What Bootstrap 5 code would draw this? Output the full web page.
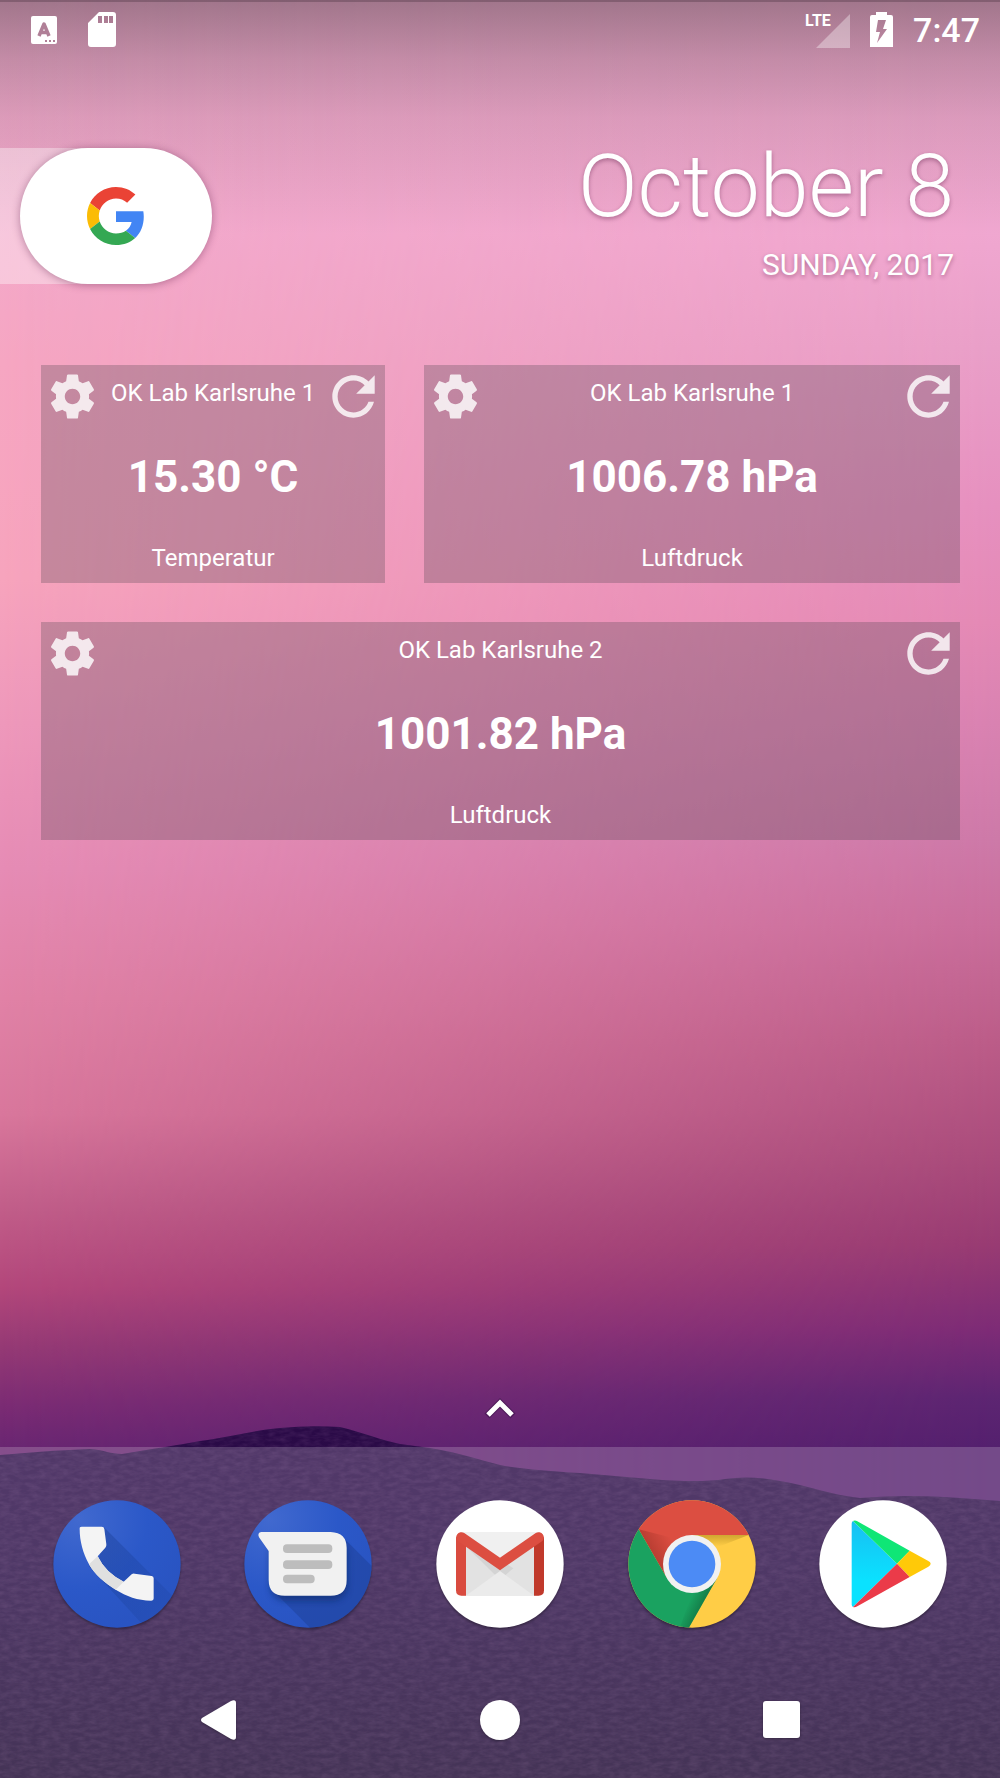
<!DOCTYPE html>
<html lang="de">
<head>
<meta charset="utf-8">
<meta name="viewport" content="width=device-width, initial-scale=1">
<title>Home screen</title>
<link href="https://cdn.jsdelivr.net/npm/bootstrap@5.3.0/dist/css/bootstrap.min.css" rel="stylesheet">
<style>
  body { font-family: Roboto, "Noto Sans", sans-serif; background: #4a3359; }
  .screen { z-index: 0; }
  .wallpaper { z-index: -1; }
  .statusbar { height: 58px; padding: 2px 20px 0 31px; }
  .clock-text { font-size: 34px; line-height: 40px; font-weight: 500; }
  .signal { width: 43px; height: 36px; }
  .lte { font-size: 16px; line-height: 18px; font-weight: 700; left: -2px; }
  .top-row { padding-top: 90px; }
  .search-tab { width: 212px; height: 136px; padding-left: 20px;
    background: linear-gradient(90deg, rgba(255,255,255,.36) 90px, transparent 130px); }
  .search-pill { border-radius: 68px; box-shadow: 0 1px 8px rgba(80,20,60,.4); }
  .date-block { padding-right: 46px; text-shadow: 0 2px 4px rgba(80,20,60,.4); }
  .date-day { font-size: 88px; line-height: 76px; font-weight: 300; }
  .date-year { font-size: 30px; line-height: 36px; margin-top: 23px; }
  .widgets { display: grid; grid-template-columns: repeat(5, 1fr); gap: 39px; padding: 81px 40px 0 41px; }
  .span-2 { grid-column: span 2; }
  .span-3 { grid-column: span 3; }
  .span-5 { grid-column: span 5; }
  .sensor { height: 218px; padding: 5px; background: rgba(80,70,80,.29); }
  .sensor-head { height: 45px; }
  .sensor h2 { font-size: 24px; line-height: 46px; font-weight: 400; }
  .sensor-value { font-size: 44px; line-height: 52px; font-weight: 700; }
  .sensor-kind { font-size: 24px; line-height: 40px; }
  .plain-btn { background: none; border: 0; padding: 0; color: inherit; display: block; }
  .sensor .plain-btn { opacity: .82; }
  .dock { background: rgba(255,255,255,.19); padding-top: 53px; }
  .apps { padding: 0 21px; }
  .apps svg { filter: drop-shadow(0 2px 1px rgba(0,0,0,.3)); }
  .navkeys { padding: 70px 78px 36px; }
  .navkeys svg { filter: drop-shadow(0 1px 1px rgba(0,0,0,.3)); }
  .drawer-up { padding-bottom: 27px; }
</style>
<script src="https://cdn.jsdelivr.net/npm/bootstrap@5.3.0/dist/js/bootstrap.bundle.min.js"></script>
</head>
<body class="text-white">
<div class="screen position-relative min-vh-100 d-flex flex-column overflow-hidden">

  <!-- wallpaper: dusk sky over hills -->
  <svg class="wallpaper position-absolute top-0 start-0 w-100 h-100" viewBox="0 0 1000 1778" preserveAspectRatio="none" aria-hidden="true">
    <defs>
      <linearGradient id="skyL" gradientUnits="userSpaceOnUse" x1="0" y1="0" x2="0" y2="1447">
        <stop offset="0" stop-color="#efa8ca"/><stop offset=".15" stop-color="#f3a9cb"/>
        <stop offset=".25" stop-color="#f6a6c2"/><stop offset=".4" stop-color="#f7a4bd"/>
        <stop offset=".5" stop-color="#ee98bb"/><stop offset=".6" stop-color="#e68cb5"/>
        <stop offset=".69" stop-color="#e182a6"/><stop offset=".77" stop-color="#d9779c"/>
        <stop offset=".83" stop-color="#c3608b"/><stop offset=".89" stop-color="#b3477b"/>
        <stop offset=".93" stop-color="#963a75"/><stop offset=".97" stop-color="#7c2c74"/>
        <stop offset="1" stop-color="#6a2672"/>
      </linearGradient>
      <linearGradient id="skyR" gradientUnits="userSpaceOnUse" x1="0" y1="0" x2="0" y2="1447">
        <stop offset="0" stop-color="#efa8ca"/><stop offset=".16" stop-color="#f0a7d0"/>
        <stop offset=".24" stop-color="#e99fc8"/><stop offset=".35" stop-color="#e690bf"/>
        <stop offset=".43" stop-color="#e489b5"/><stop offset=".5" stop-color="#d982b1"/>
        <stop offset=".58" stop-color="#cd79a8"/><stop offset=".64" stop-color="#c96d9b"/>
        <stop offset=".72" stop-color="#bb5c88"/><stop offset=".8" stop-color="#a94b7b"/>
        <stop offset=".86" stop-color="#983b72"/><stop offset=".92" stop-color="#7c2b76"/>
        <stop offset=".965" stop-color="#5d2572"/><stop offset="1" stop-color="#54206e"/>
      </linearGradient>
      <linearGradient id="fade"><stop offset="0" stop-color="#000"/><stop offset="1" stop-color="#fff"/></linearGradient>
      <mask id="toRight"><rect width="1000" height="1778" fill="url(#fade)"/></mask>
      <linearGradient id="scrim" gradientUnits="userSpaceOnUse" x1="0" y1="0" x2="0" y2="235">
        <stop offset="0" stop-color="#1c2020" stop-opacity=".37"/><stop offset=".25" stop-color="#1c2020" stop-opacity=".21"/>
        <stop offset=".5" stop-color="#1c2020" stop-opacity=".1"/><stop offset="1" stop-color="#1c2020" stop-opacity="0"/>
      </linearGradient>
      <linearGradient id="hill" x1="0" y1="0" x2="0" y2="1">
        <stop offset="0" stop-color="#2a0a47"/><stop offset=".4" stop-color="#260a43"/><stop offset="1" stop-color="#1a0530"/>
      </linearGradient>
      <filter id="grain" x="0" y="0" width="1" height="1">
        <feTurbulence type="fractalNoise" baseFrequency=".1 .24" numOctaves="3" seed="4"/>
        <feColorMatrix values="0 0 0 0 .6  0 0 0 0 .3  0 0 0 0 .6  1 0 0 0 -.3"/>
        <feComposite in2="SourceGraphic" operator="in"/>
      </filter>
      <path id="ridge" d="M0 1455L50 1451 90 1449C105 1450 110 1454 122 1454C150 1449 180 1445 200 1441C230 1437 250 1431 280 1428Q310 1425 340 1427C365 1433 380 1440 400 1444L430 1448C460 1453 480 1460 500 1465C520 1469 550 1471 580 1473L650 1479Q700 1483 725 1479T780 1481C810 1486 830 1495 860 1498Q910 1494 960 1498L1000 1501V1778H0Z"/>
    </defs>
    <rect width="1000" height="1778" fill="url(#skyL)"/>
    <rect width="1000" height="1778" fill="url(#skyR)" mask="url(#toRight)"/>
    <rect width="1000" height="235" fill="url(#scrim)"/>
    <rect width="1000" height="2" fill="#3c2834" opacity=".3"/>
    <use href="#ridge" fill="url(#hill)"/>
    <use href="#ridge" fill="#fff" filter="url(#grain)" opacity=".2"/>
  </svg>

  <header class="statusbar d-flex align-items-center justify-content-between">
    <div class="d-flex align-items-center">
      <svg width="26" height="28" viewBox="0 0 26 28" role="img" aria-label="Tastatur">
        <rect width="26" height="28" rx="2" fill="#fff"/>
        <path d="M8 20l5-12 5 12M10 16.500h6" fill="none" stroke="#b07f97" stroke-width="3.500" stroke-linejoin="round"/>
        <path d="M14 24h2v2h-2zM18 24h2v2h-2zM22 24h2v2h-2z" fill="#b07f97"/>
      </svg>
      <svg class="ms-4" width="42" height="36" viewBox="-7 0 42 36" role="img" aria-label="SD-Karte">
        <path fill="#fff" fill-rule="evenodd" d="M11 0H25Q28 0 28 3V32Q28 35 25 35H3Q0 35 0 32V11ZM10 4v7h4V4zM16 4v7h4V4zM21 4v7h4V4z"/>
      </svg>
    </div>
    <div class="d-flex align-items-center">
      <div class="signal position-relative">
        <svg class="position-absolute bottom-0 end-0" width="34" height="34" viewBox="0 0 34 34" aria-hidden="true"><path d="M34 0V34H0z" fill="#fff" opacity=".35"/></svg>
        <span class="lte position-absolute top-0">LTE</span>
      </div>
      <svg class="ms-3" width="31" height="36" viewBox="-4 0 31 36" role="img" aria-label="Akku lädt">
        <path fill="#fff" fill-rule="evenodd" d="M6 0H17V3H21Q23 3 23 5V35H0V5Q0 3 2 3H6ZM8 8L6 20H10L7 31 17 17H13L16 8Z"/>
      </svg>
      <span class="clock-text ms-3">7:47</span>
    </div>
  </header>

  <section class="top-row d-flex justify-content-between align-items-start">
    <div class="search-tab">
      <button class="search-pill plain-btn bg-white w-100 h-100 d-flex align-items-center justify-content-center" aria-label="Google-Suche">
        <svg width="58" height="58" viewBox="0 0 48 48" aria-hidden="true">
          <path fill="#EA4335" d="M24 9.500c3.540 0 6.710 1.220 9.210 3.600l6.850-6.850C35.900 2.380 30.470 0 24 0 14.620 0 6.510 5.380 2.560 13.220l7.980 6.190C12.430 13.720 17.740 9.500 24 9.500z"/>
          <path fill="#4285F4" d="M46.980 24.550c0-1.570-.15-3.090-.38-4.550H24v9.020h12.940c-.58 2.960-2.260 5.480-4.780 7.180l7.730 6c4.510-4.180 7.090-10.360 7.090-17.650z"/>
          <path fill="#FBBC05" d="M10.530 28.590c-.48-1.450-.76-2.990-.76-4.590s.27-3.140.76-4.590l-7.980-6.190C.92 16.460 0 20.120 0 24c0 3.880.92 7.540 2.560 10.780l7.970-6.190z"/>
          <path fill="#34A853" d="M24 48c6.480 0 11.930-2.130 15.890-5.810l-7.730-6c-2.150 1.450-4.920 2.300-8.160 2.300-6.260 0-11.570-4.220-13.470-9.910l-7.980 6.190C6.510 42.620 14.620 48 24 48z"/>
        </svg>
      </button>
    </div>
    <div class="date-block text-end">
      <div class="date-day">October 8</div>
      <div class="date-year">SUNDAY, 2017</div>
    </div>
  </section>

  <svg class="d-none" aria-hidden="true">
    <symbol id="gear" viewBox="0 0 24 24"><path fill="#fff" d="M19.430 12.980c.04-.32.070-.64.070-.98s-.03-.66-.07-.98l2.110-1.650c.19-.15.240-.42.120-.64l-2-3.460c-.12-.22-.39-.3-.61-.22l-2.490 1c-.52-.4-1.080-.73-1.690-.98l-.38-2.650C14.460 2.180 14.250 2 14 2h-4c-.25 0-.46.180-.49.420l-.38 2.650c-.61.250-1.170.590-1.690.980l-2.490-1c-.23-.09-.49 0-.61.220l-2 3.460c-.13.220-.07.490.120.640l2.110 1.650c-.04.320-.07.650-.07.980s.03.660.070.980l-2.110 1.650c-.19.150-.24.420-.12.640l2 3.460c.12.220.390.300.610.220l2.490-1c.52.400 1.080.730 1.690.980l.38 2.650c.03.240.240.420.490.420h4c.25 0 .46-.18.490-.42l.38-2.650c.61-.25 1.170-.59 1.690-.98l2.490 1c.23.090.49 0 .61-.22l2-3.460c.12-.22.070-.49-.12-.64l-2.110-1.650zM12 15.500c-1.930 0-3.500-1.570-3.500-3.500s1.570-3.500 3.500-3.500 3.500 1.570 3.500 3.500-1.570 3.500-3.500 3.500z"/></symbol>
    <symbol id="reload" viewBox="2 2 20 20"><path fill="#fff" d="M17.650 6.350C16.200 4.900 14.210 4 12 4c-4.420 0-7.990 3.580-7.990 8s3.570 8 7.990 8c3.730 0 6.840-2.550 7.730-6h-2.080c-.82 2.330-3.040 4-5.650 4-3.310 0-6-2.690-6-6s2.690-6 6-6c1.660 0 3.140.690 4.220 1.780L13 11h7V4l-2.350 2.350z"/></symbol>
  </svg>

  <main class="widgets">
    <article class="sensor span-2 d-flex flex-column justify-content-between text-center">
      <div class="sensor-head d-flex align-items-start">
        <button class="plain-btn" aria-label="Einstellungen"><svg class="d-block" width="53" height="53"><use href="#gear"/></svg></button>
        <h2 class="flex-fill m-0">OK Lab Karlsruhe 1</h2>
        <button class="plain-btn" aria-label="Aktualisieren"><svg class="d-block" width="53" height="53"><use href="#reload"/></svg></button>
      </div>
      <div class="sensor-value">15.30 °C</div>
      <div class="sensor-kind">Temperatur</div>
    </article>
    <article class="sensor span-3 d-flex flex-column justify-content-between text-center">
      <div class="sensor-head d-flex align-items-start">
        <button class="plain-btn" aria-label="Einstellungen"><svg class="d-block" width="53" height="53"><use href="#gear"/></svg></button>
        <h2 class="flex-fill m-0">OK Lab Karlsruhe 1</h2>
        <button class="plain-btn" aria-label="Aktualisieren"><svg class="d-block" width="53" height="53"><use href="#reload"/></svg></button>
      </div>
      <div class="sensor-value">1006.78 hPa</div>
      <div class="sensor-kind">Luftdruck</div>
    </article>
    <article class="sensor span-5 d-flex flex-column justify-content-between text-center">
      <div class="sensor-head d-flex align-items-start">
        <button class="plain-btn" aria-label="Einstellungen"><svg class="d-block" width="53" height="53"><use href="#gear"/></svg></button>
        <h2 class="flex-fill m-0">OK Lab Karlsruhe 2</h2>
        <button class="plain-btn" aria-label="Aktualisieren"><svg class="d-block" width="53" height="53"><use href="#reload"/></svg></button>
      </div>
      <div class="sensor-value">1001.82 hPa</div>
      <div class="sensor-kind">Luftdruck</div>
    </article>
  </main>

  <div class="drawer-up mt-auto d-flex justify-content-center">
    <button class="plain-btn" aria-label="Alle Apps">
      <svg class="d-block" width="34" height="22" viewBox="0 0 34 22"><path d="M4 18L17 5 30 18" fill="none" stroke="#2c0b3c" stroke-opacity=".45" stroke-width="7"/><path d="M5 17L17 5 29 17" fill="none" stroke="#fff" stroke-width="5"/></svg>
    </button>
  </div>

  <footer class="dock">
    <div class="apps d-flex">
      <a href="#phone" class="col d-flex justify-content-center" aria-label="Telefon">
        <svg width="128" height="128" viewBox="160 361 384 384">
          <defs>
            <radialGradient id="blue" cx=".2" cy=".15" r=".9"><stop offset="0" stop-color="#4169cf"/><stop offset=".6" stop-color="#2b58c8"/><stop offset="1" stop-color="#2954c2"/></radialGradient>
            <clipPath id="cp"><circle cx="352" cy="553" r="191"/></clipPath>
            <linearGradient id="ls" x1="0" y1="0" x2="1" y2="1"><stop offset="0" stop-color="#173a8c" stop-opacity=".4"/><stop offset="1" stop-color="#173a8c" stop-opacity=".08"/></linearGradient>
          </defs>
          <circle cx="352" cy="553" r="191" fill="url(#blue)"/>
          <path clip-path="url(#cp)" fill="url(#ls)" d="M313 443L560 690 480 790 268 560 300 530Z"/>
          <path fill="#f4f4f4" d="M240 448Q239 441 246 441H306Q313 441 314 448L320 494Q321 500 317 504L294 530Q318 580 372 606L396 584Q400 581 405 582L456 589Q462 590 462 596V656Q462 663 454 663C414 662 380 650 348 630C315 610 285 584 268 554C250 520 240 485 240 448Z"/>
          <path fill="#e0e0e0" d="M268 554L294 530Q318 580 372 606L348 630C315 610 285 584 268 554Z"/>
        </svg>
      </a>
      <a href="#messages" class="col d-flex justify-content-center" aria-label="Nachrichten">
        <svg width="128" height="128" viewBox="734 361 384 384">
          <defs><clipPath id="cm"><circle cx="926" cy="553" r="191"/></clipPath>
            <filter id="soft" x="-20%" y="-20%" width="140%" height="150%"><feGaussianBlur stdDeviation="9"/></filter></defs>
          <circle cx="926" cy="553" r="191" fill="url(#blue)"/>
          <path clip-path="url(#cm)" fill="#1c3f92" opacity=".45" d="M1030 472L1130 572V760H948L820 632Z"/>
          <rect x="812" y="480" width="232" height="184" rx="46" fill="#102a66" opacity=".55" filter="url(#soft)" clip-path="url(#cm)"/>
          <path fill="#f1f1f1" d="M786 457H994Q1042 459 1042 505V600Q1042 648 994 648H856Q808 648 808 600V514L779 473Q773 459 786 457Z"/>
          <g fill="#bdbdbd"><rect x="851" y="494" width="148" height="26" rx="12"/><rect x="851" y="542" width="148" height="26" rx="12"/><rect x="851" y="585" width="95" height="26" rx="12"/></g>
        </svg>
      </a>
      <a href="#gmail" class="col d-flex justify-content-center" aria-label="Gmail">
        <svg width="128" height="128" viewBox="1308 361 384 384">
          <circle cx="1500" cy="553" r="191" fill="#fff"/>
          <rect x="1384" y="457" width="232" height="191" fill="#e2e2e2"/>
          <path d="M1384 457H1616L1500 545Z" fill="#f0f0f0"/>
          <path d="M1398 500L1500 600 1540 566 1500 540Z" fill="#d4d4d4"/>
          <path d="M1398 648L1500 574 1602 648Z" fill="#ebebeb"/>
          <path d="M1368 473H1398V648H1384Q1368 648 1368 632Z" fill="#d94b3f"/>
          <path d="M1632 473H1602V648H1616Q1632 648 1632 632Z" fill="#c0392b"/>
          <path d="M1384 473L1500 553 1616 473" fill="none" stroke="#dc4e41" stroke-width="31" stroke-linecap="round" stroke-linejoin="miter"/>
        </svg>
      </a>
      <a href="#chrome" class="col d-flex justify-content-center" aria-label="Chrome">
        <svg width="128" height="128" viewBox="384 361 384 384">
          <defs>
            <linearGradient id="rs" gradientUnits="userSpaceOnUse" x1="440" y1="510" x2="510" y2="470"><stop offset="0" stop-color="#7a2018" stop-opacity=".4"/><stop offset="1" stop-color="#7a2018" stop-opacity="0"/></linearGradient>
            <linearGradient id="ys" gradientUnits="userSpaceOnUse" x1="0" y1="466" x2="0" y2="500"><stop offset="0" stop-color="#8a6a10" stop-opacity=".4"/><stop offset="1" stop-color="#8a6a10" stop-opacity="0"/></linearGradient>
            <linearGradient id="gs" gradientUnits="userSpaceOnUse" x1="610" y1="680" x2="570" y2="660"><stop offset="0" stop-color="#0a4a28" stop-opacity=".45"/><stop offset="1" stop-color="#0a4a28" stop-opacity="0"/></linearGradient>
            <clipPath id="cc"><circle cx="576" cy="553" r="191"/></clipPath>
          </defs>
          <g clip-path="url(#cc)">
            <rect x="384" y="361" width="384" height="384" fill="#ffcd46"/>
            <path d="M576 466H746L660 500H610Z" fill="url(#ys)"/>
            <path d="M416 449L350 340H800V466H576L501 596Z" fill="#dc4e41"/>
            <path d="M416 449L501 596 540 480Z" fill="url(#rs)"/>
            <path d="M416 449L501 596 576 630 651 596 560 756H370V400Z" fill="#1aa260"/>
            <path d="M651 596L560 756 540 742 580 630Z" fill="url(#gs)"/>
          </g>
          <circle cx="576" cy="553" r="87" fill="#f1f1f1"/><circle cx="576" cy="553" r="70" fill="#4c8bf5"/>
        </svg>
      </a>
      <a href="#play" class="col d-flex justify-content-center" aria-label="Play Store">
        <svg width="128" height="128" viewBox="958 361 384 384">
          <defs><linearGradient id="pb" x1="0" y1="0" x2="0" y2="1"><stop offset="0" stop-color="#18bff2"/><stop offset=".7" stop-color="#0ae2ff"/></linearGradient></defs>
          <circle cx="1150" cy="553" r="191" fill="#fff"/>
          <path d="M1060 424L1192 552 1060 682Q1056 680 1056 674V432Q1056 426 1060 424Z" fill="url(#pb)"/>
          <path d="M1060 424Q1066 420 1073 425L1230 513 1192 552Z" fill="#0fe676"/>
          <path d="M1230 513L1286 544Q1300 552 1286 561L1230 592 1192 552Z" fill="#ffc908"/>
          <path d="M1192 552L1230 592 1073 680Q1066 684 1060 682Z" fill="#eb3b49"/>
        </svg>
      </a>
    </div>
    <nav class="navkeys d-flex">
      <div class="col d-flex justify-content-center"><button class="plain-btn" aria-label="Zurück"><svg class="d-block" width="40" height="44" viewBox="0 0 40 44"><path d="M3 20L32 3Q37 1 37 5V39Q37 43 32 41L3 24Q1 22 3 20Z" fill="#fff"/></svg></button></div>
      <div class="col d-flex justify-content-center"><button class="plain-btn" aria-label="Startseite"><svg class="d-block" width="44" height="44" viewBox="0 0 44 44"><circle cx="22" cy="22" r="20" fill="#fff"/></svg></button></div>
      <div class="col d-flex justify-content-center"><button class="plain-btn" aria-label="Letzte Apps"><svg class="d-block" width="44" height="44" viewBox="0 0 44 44"><rect x="4" y="3" width="37" height="37" rx="3" fill="#fff"/></svg></button></div>
    </nav>
  </footer>
</div>
</body>
</html>
